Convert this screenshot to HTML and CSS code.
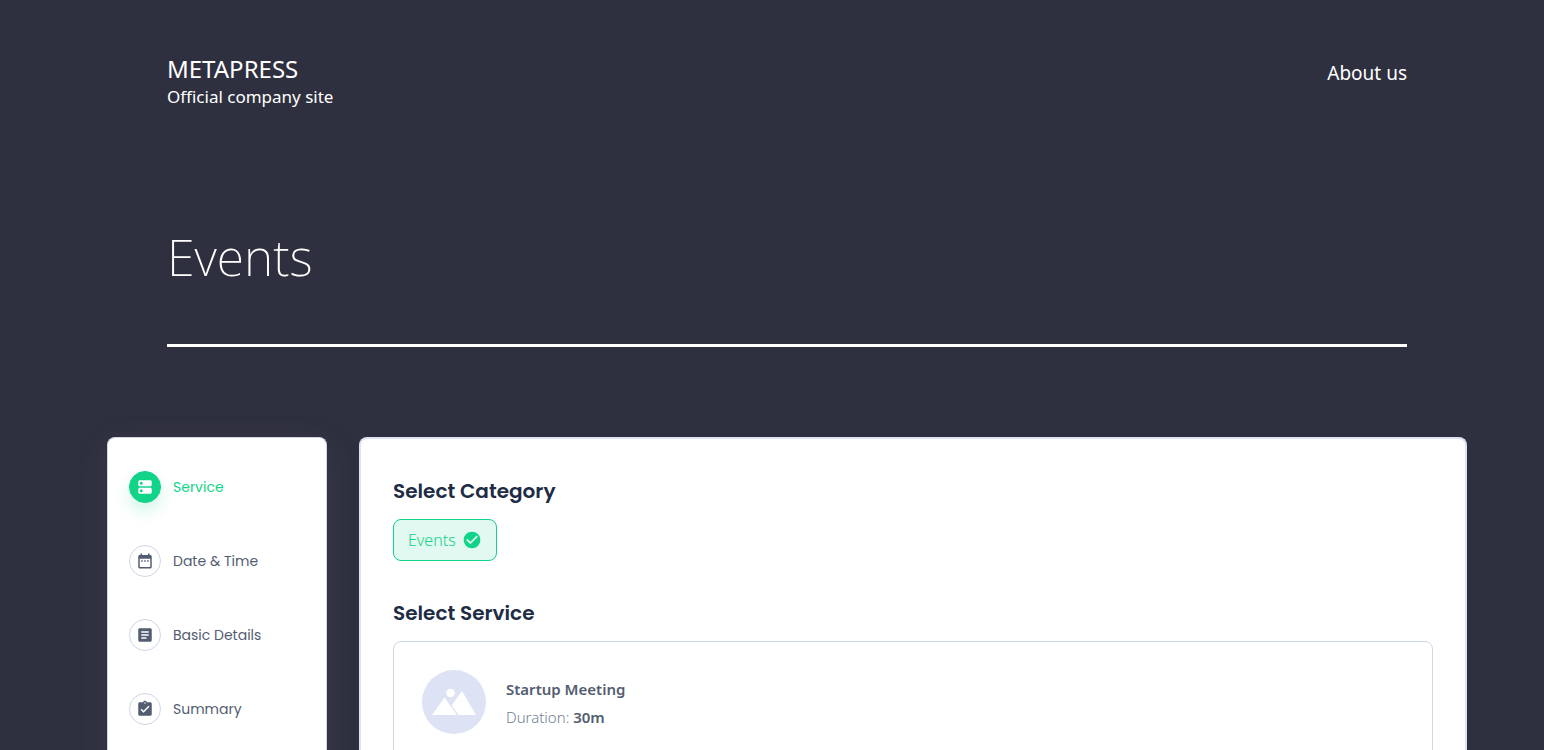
FILE: index.html
```html
<!DOCTYPE html>
<html lang="en">
<head>
<meta charset="utf-8">
<title>Events – METAPRESS</title>
<link rel="stylesheet" href="styles.css">
</head>
<body>
<div class="page">
  <header class="site-header">
    <div class="brand">
      <a class="brand-name" href="#">METAPRESS</a>
      <p class="tagline">Official company site</p>
    </div>
    <nav><a class="nav-link" href="#about">About us</a></nav>
  </header>
  <div class="title-bar"><h1>Events</h1></div>
  <main class="booking">
    <nav class="steps" aria-label="Booking steps">
      <a class="step active" href="#service">
        <span class="step-icon"><svg viewBox="0 0 24 24"><path fill-rule="evenodd" d="M19 13H5c-1.100 0-2 .9-2 2v4c0 1.100.9 2 2 2h14c1.100 0 2-.9 2-2v-4c0-1.100-.9-2-2-2zM7 19a2 2 0 1 1 0-4 2 2 0 0 1 0 4zM19 3H5c-1.100 0-2 .9-2 2v4c0 1.100.9 2 2 2h14c1.100 0 2-.9 2-2V5c0-1.100-.9-2-2-2zM7 9a2 2 0 1 1 0-4 2 2 0 0 1 0 4z"/></svg></span>
        <span>Service</span>
      </a>
      <a class="step" href="#date">
        <span class="step-icon"><svg viewBox="0 0 24 24"><path fill-rule="evenodd" d="M9 11H7v2h2v-2zm4 0h-2v2h2v-2zm4 0h-2v2h2v-2zm2-7h-1V2h-2v2H8V2H6v2H5c-1.100 0-2 .9-2 2v14c0 1.100.9 2 2 2h14c1.100 0 2-.9 2-2V6c0-1.100-.9-2-2-2zm0 16H5V9h14v11z"/></svg></span>
        <span>Date &amp; Time</span>
      </a>
      <a class="step" href="#details">
        <span class="step-icon"><svg viewBox="0 0 24 24"><path fill-rule="evenodd" d="M19 3H5c-1.100 0-2 .9-2 2v14c0 1.100.9 2 2 2h14c1.100 0 2-.9 2-2V5c0-1.100-.9-2-2-2zM14 17H7v-2h7v2zm3-4H7v-2h10v2zm0-4H7V7h10v2z"/></svg></span>
        <span>Basic Details</span>
      </a>
      <a class="step" href="#summary">
        <span class="step-icon"><svg viewBox="0 0 24 24"><path fill-rule="evenodd" d="M19 3h-4.180C14.400 1.840 13.300 1 12 1s-2.400.84-2.820 2H5c-1.100 0-2 .9-2 2v14c0 1.100.9 2 2 2h14c1.100 0 2-.9 2-2V5c0-1.100-.9-2-2-2zM12 3a1 1 0 1 1 0 2 1 1 0 0 1 0-2zM10 17l-4-4 1.410-1.410L10 14.170l6.590-6.590L18 9l-8 8z"/></svg></span>
        <span>Summary</span>
      </a>
    </nav>
    <section class="panel">
      <h2>Select Category</h2>
      <button class="category" type="button">Events
        <svg viewBox="0 0 24 24"><path d="M12 2a10 10 0 1 0 0 20 10 10 0 0 0 0-20zM10 17l-5-5 1.410-1.410L10 14.170l7.590-7.590L19 8l-9 9z"/></svg>
      </button>
      <h2>Select Service</h2>
      <article class="service">
        <svg class="thumb" viewBox="0 0 64 64"><circle cx="32" cy="32" r="32" fill="#dde3f5"/><g fill="#fff"><circle cx="28.500" cy="23" r="4.300"/><path d="M10 45 22.500 27.500 35 45z"/><path d="M31 33.500 40 21 54 45H36.500L29.500 35.500z"/></g><path d="M27.500 33.500 36 45" stroke="#dde3f5" stroke-width=".7"/></svg>
        <div>
          <h3>Startup Meeting</h3>
          <p class="duration">Duration: <strong>30m</strong></p>
        </div>
      </article>
    </section>
  </main>
</div>
</body>
</html>
```

FILE: styles.css
```css
* { box-sizing: border-box; }
body {
  margin: 0;
  background: #2f303f;
  color: #fff;
  font-family: "Noto Sans", sans-serif;
}
h1, h2, h3, p { margin: 0; }
a { color: inherit; text-decoration: none; }
svg { display: block; fill: currentColor; }
.page {
  display: flex;
  flex-direction: column;
  height: 100vh;
  overflow: hidden;
  padding: 53px 77px 0 107px;
}
.site-header {
  display: flex;
  justify-content: space-between;
  align-items: flex-start;
  margin: 0 60px;
}
.brand-name { display: block; font-size: 24px; line-height: 32px; }
.tagline { font-size: 17px; line-height: 24px; }
.nav-link { display: block; font-size: 19px; line-height: 40px; }
.title-bar {
  margin: 112px 60px 90px;
  padding-bottom: 51px;
  border-bottom: 3px solid #fff;
}
h1 { font-size: 50px; line-height: 72px; font-weight: 200; }
.booking { display: flex; flex: 1; gap: 32px; align-items: stretch; }
.steps {
  display: flex;
  flex-direction: column;
  gap: 42px;
  flex: 0 0 220px;
  padding: 33px 21px;
  background: #fff;
  border: 1px solid #cfd6e5;
  border-bottom: 0;
  border-radius: 8px 8px 0 0;
  box-shadow: 0 8px 32px rgba(120, 110, 135, .14);
}
.step {
  display: flex;
  align-items: center;
  gap: 12px;
  color: #535d71;
  font-family: Poppins, Inter, sans-serif;
  font-size: 14px;
  line-height: 24px;
}
.step-icon {
  display: grid;
  place-items: center;
  width: 32px;
  height: 32px;
  border: 1px solid #cfd6e5;
  border-radius: 50%;
}
.step-icon svg { width: 18px; height: 18px; }
.step.active { color: #12d488; }
.active .step-icon {
  color: #fff;
  background: #12d488;
  border-color: #12d488;
  box-shadow: 0 8px 16px rgba(18, 212, 136, .2);
}
.panel {
  flex: 1;
  padding: 36px 32px 0;
  background: #fff;
  border: 2px solid #dde3f5;
  border-bottom: 0;
  border-radius: 8px 8px 0 0;
}
h2 {
  margin-bottom: 12px;
  color: #202c45;
  font-family: Poppins, Inter, sans-serif;
  font-size: 20px;
  line-height: 32px;
  font-weight: 600;
}
.category {
  display: flex;
  align-items: center;
  gap: 6px;
  height: 42px;
  margin-bottom: 36px;
  padding: 0 14px;
  color: #12d488;
  background: #e2f9f1;
  border: 1px solid #12d488;
  border-radius: 8px;
  font: 300 16px/24px "Noto Sans", sans-serif;
}
.category svg { width: 20px; height: 20px; }
.service {
  display: flex;
  gap: 20px;
  height: 140px;
  padding: 28px;
  border: 1px solid #cfd6e5;
  border-radius: 8px;
}
.thumb { width: 64px; height: 64px; }
h3 { padding-top: 5px; color: #535d71; font-size: 15px; line-height: 28px; font-weight: 600; }
.duration { color: #727e95; font-size: 15px; line-height: 28px; font-weight: 300; }
.duration strong { color: #535d71; font-weight: 600; }
```
